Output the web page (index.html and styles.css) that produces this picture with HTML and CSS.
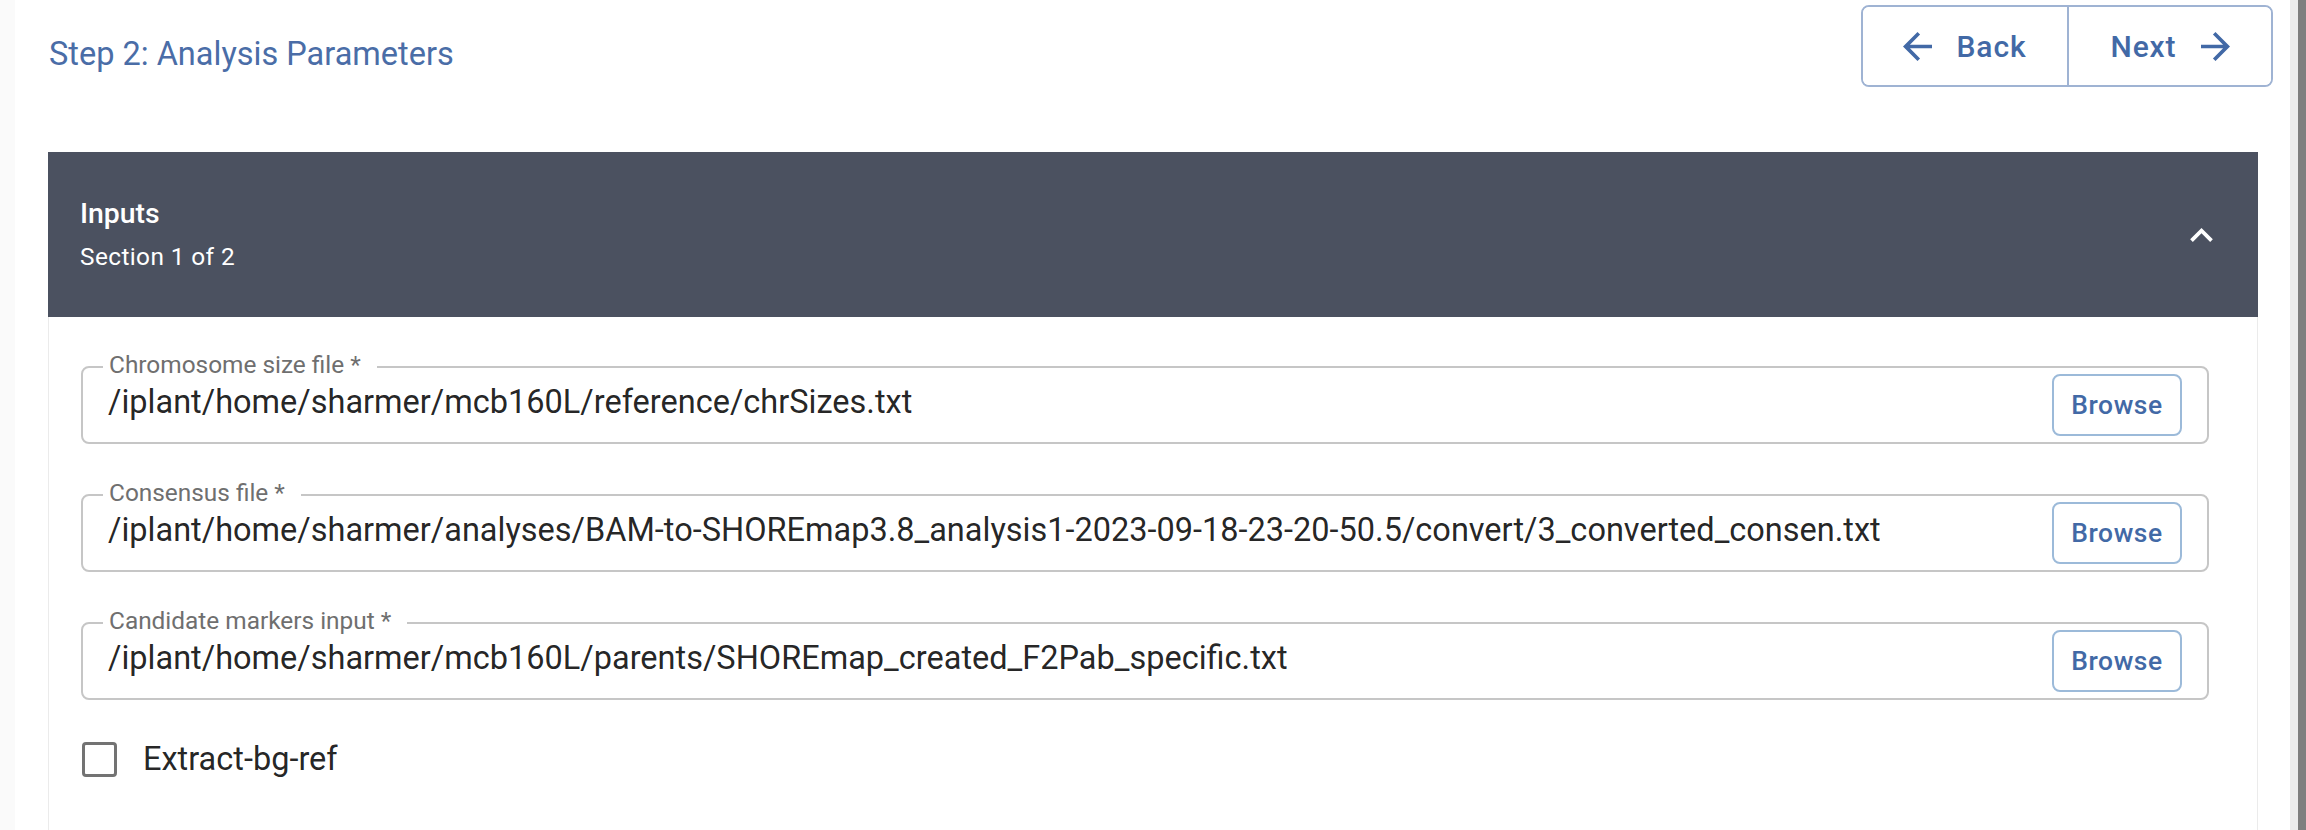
FILE: index.html
```html
<!DOCTYPE html>
<html>
<head>
<meta charset="utf-8">
<link rel="stylesheet" href="styles.css">
</head>
<body>
<div class="app">
  <div class="left-rail"></div>
  <main class="main">
    <div class="topbar">
      <h1 class="step-title">Step 2: Analysis Parameters</h1>
      <div class="nav-group">
        <button class="nav-btn">
          <svg class="nav-icon" viewBox="4 4 16 16"><path d="M20 11H7.83l5.59-5.59L12 4l-8 8 8 8 1.41-1.41L7.83 13H20v-2z"/></svg>
          <span>Back</span>
        </button>
        <button class="nav-btn nav-btn-next">
          <span>Next</span>
          <svg class="nav-icon" viewBox="4 4 16 16"><path d="M12 4l-1.41 1.41L16.17 11H4v2h12.17l-5.58 5.59L12 20l8-8z"/></svg>
        </button>
      </div>
    </div>

    <section class="card">
      <header class="card-header">
        <div class="card-titles">
          <div class="card-title">Inputs</div>
          <div class="card-subtitle">Section 1 of 2</div>
        </div>
        <svg class="chevron" viewBox="6 8 12 7.41"><path d="M12 8l-6 6 1.41 1.41L12 10.83l4.59 4.58L18 14z"/></svg>
      </header>
      <div class="card-body">
        <div class="field">
          <span class="field-label">Chromosome size file *</span>
          <span class="field-value">/iplant/home/sharmer/mcb160L/reference/chrSizes.txt</span>
          <button class="browse-btn">Browse</button>
        </div>
        <div class="field">
          <span class="field-label">Consensus file *</span>
          <span class="field-value">/iplant/home/sharmer/analyses/BAM-to-SHOREmap3.8_analysis1-2023-09-18-23-20-50.5/convert/3_converted_consen.txt</span>
          <button class="browse-btn">Browse</button>
        </div>
        <div class="field">
          <span class="field-label">Candidate markers input *</span>
          <span class="field-value">/iplant/home/sharmer/mcb160L/parents/SHOREmap_created_F2Pab_specific.txt</span>
          <button class="browse-btn">Browse</button>
        </div>
        <label class="check-row">
          <span class="check-box"></span>
          <span class="check-label">Extract-bg-ref</span>
        </label>
      </div>
    </section>
  </main>
  <div class="scroll-track"></div>
  <div class="scroll-thumb"></div>
</div>
</body>
</html>
```

FILE: styles.css
```css
* { box-sizing: border-box; }

html, body {
  margin: 0;
  padding: 0;
  height: 100%;
  overflow: hidden;
}

body {
  font-family: Roboto, "Liberation Sans", sans-serif;
  background: #ffffff;
  color: rgba(0, 0, 0, 0.87);
}

.app {
  display: flex;
  height: 830px;
}

.left-rail {
  width: 15px;
  flex: none;
  background: #fafafa;
}

.scroll-track {
  width: 8px;
  flex: none;
  background: #ececec;
}

.scroll-thumb {
  width: 8px;
  flex: none;
  background: #7f7f7f;
}

.main {
  flex: 1;
  padding: 5px 17px 0 33px;
  background: #ffffff;
  overflow: hidden;
}

.topbar {
  display: flex;
  justify-content: space-between;
  align-items: flex-start;
}

.step-title {
  margin: 30px 0 0 1px;
  font-size: 32.5px;
  font-weight: 400;
  line-height: 39px;
  color: #4a6da7;
}

.nav-group {
  display: flex;
  border: 2px solid #9fb3d3;
  border-radius: 8px;
  overflow: hidden;
}

.nav-btn {
  width: 204px;
  height: 78px;
  display: flex;
  align-items: center;
  justify-content: center;
  gap: 24px;
  border: none;
  background: #ffffff;
  font-family: Roboto, "Liberation Sans", sans-serif;
  font-size: 30px;
  font-weight: 500;
  letter-spacing: 0.9px;
  color: #4269a6;
  padding: 0;
}

.nav-btn-next {
  border-left: 2px solid #9fb3d3;
}

.nav-icon {
  width: 29px;
  height: 29px;
  fill: #4269a6;
}

.card {
  margin: 65px 15px 0 0;
  border: 1px solid #ebebeb;
  border-top: none;
  height: 700px;
}

.card-header {
  height: 165px;
  background: #4b5160;
  display: flex;
  align-items: center;
  justify-content: space-between;
  padding: 0 45px 0 32px;
  margin: 0 -1px;
}

.card-titles {
  display: flex;
  flex-direction: column;
  gap: 6px;
  margin-top: -2px;
}

.card-title {
  font-size: 28.4px;
  font-weight: 500;
  color: #ffffff;
  line-height: 40px;
}

.card-subtitle {
  font-size: 24.4px;
  font-weight: 400;
  color: #ffffff;
  letter-spacing: 0.4px;
  line-height: 34px;
}

.chevron {
  width: 23px;
  height: 14px;
  fill: #ffffff;
}

.card-body {
  padding: 49px 48px 0 32px;
  display: flex;
  flex-direction: column;
  gap: 50px;
}

.field {
  position: relative;
  height: 78px;
  border: 2px solid #c6c6c6;
  border-radius: 8px;
  display: flex;
  align-items: center;
  justify-content: space-between;
  padding: 0 25px 0 25px;
}

.field-label {
  position: absolute;
  left: 20px;
  top: -18px;
  padding: 0 16px 0 6px;
  background: #ffffff;
  font-size: 24.4px;
  line-height: 30px;
  color: #6f6f6f;
}

.field-value {
  font-size: 32.5px;
  line-height: 40px;
  color: rgba(0, 0, 0, 0.87);
  white-space: nowrap;
  margin-top: -6px;
}

.browse-btn {
  width: 130px;
  height: 62px;
  border: 2px solid #9cbad9;
  border-radius: 8px;
  background: #ffffff;
  font-family: Roboto, "Liberation Sans", sans-serif;
  font-size: 26.4px;
  font-weight: 500;
  letter-spacing: 0.6px;
  color: #4269a6;
  padding: 0;
}

.check-row {
  display: flex;
  align-items: center;
  gap: 26px;
  margin-top: -9px;
  padding-left: 1px;
}

.check-box {
  width: 35px;
  height: 35px;
  border: 3.5px solid #737373;
  border-radius: 4px;
}

.check-label {
  font-size: 32.5px;
  color: rgba(0, 0, 0, 0.87);
  line-height: 36px;
}
```
